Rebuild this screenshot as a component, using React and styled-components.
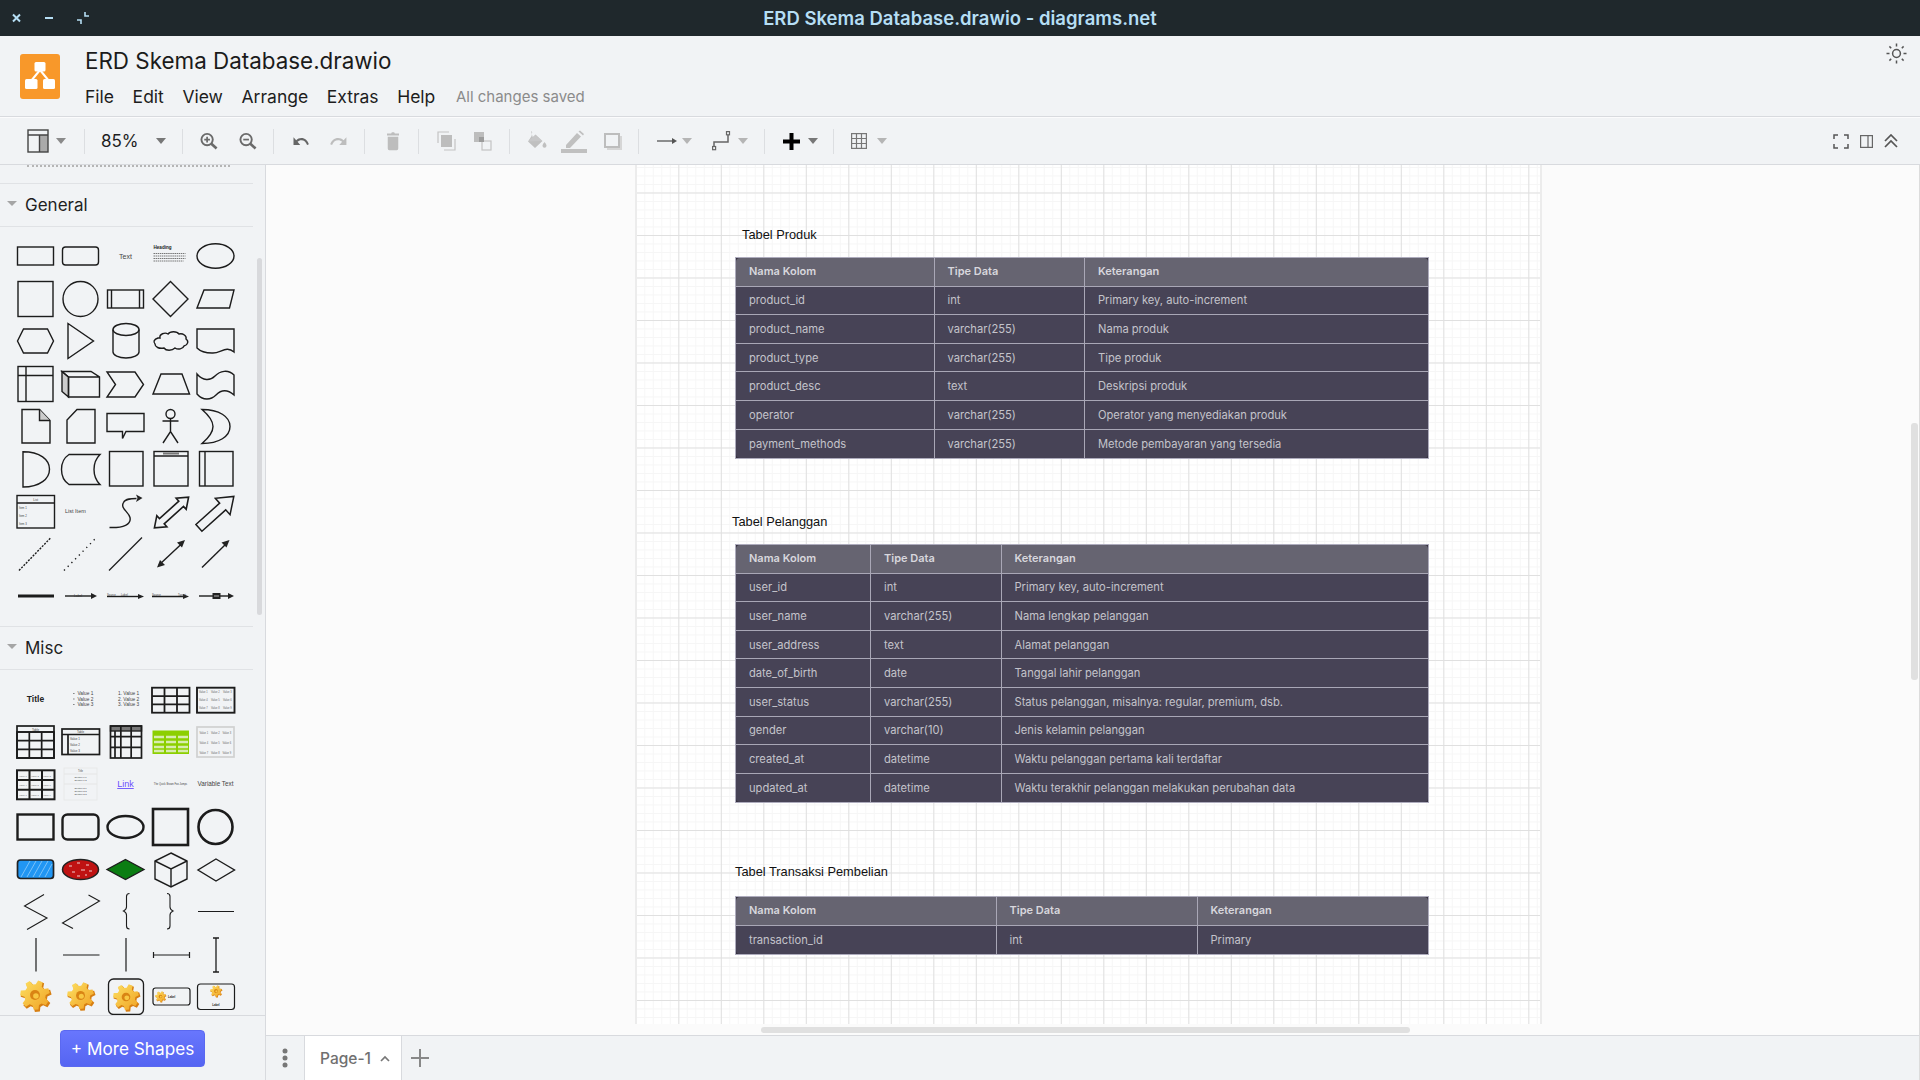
import React from 'react';
import styled, { createGlobalStyle } from 'styled-components';

const GlobalStyle = createGlobalStyle`
  html, body { margin: 0; padding: 0; height: 100%; overflow: hidden; }
  body { font-family: Inter, "Liberation Sans", sans-serif; background: #f1f3f5; }
  * { box-sizing: border-box; }
`;

const Shell = styled.div`
  display: flex;
  flex-direction: column;
  width: 1920px;
  height: 1080px;
  overflow: hidden;
`;

const TitleBar = styled.div`
  position: relative;
  display: flex;
  align-items: center;
  justify-content: center;
  flex: 0 0 36px;
  background: #1f282c;
  color: #b5def4;
  font-size: 18.5px;
  font-weight: 600;
`;

const WindowButtons = styled.div`
  position: absolute;
  left: 12px;
  top: 12px;
  display: flex;
  gap: 24px;
  height: 12px;
`;

const Header = styled.div`
  display: flex;
  flex: 0 0 81px;
  background: #f1f3f5;
  border-bottom: 1px solid #d8dade;
  padding-left: 20px;
`;

const LogoBox = styled.div`
  width: 40px;
  height: 45px;
  margin-top: 18px;
  border-radius: 3px;
  background: #f8982a;
`;

const TitleBlock = styled.div`
  margin-left: 25px;
  padding-top: 13px;
  flex: 1;
`;

const FileName = styled.div`
  font-size: 22.4px;
  line-height: 24px;
  color: #1b1b1b;
`;

const MenuRow = styled.div`
  display: flex;
  align-items: center;
  gap: 18.6px;
  margin-top: 11px;
  height: 24px;
  font-size: 17.5px;
  color: #1d1d1d;
`;

const SavedNote = styled.span`
  font-size: 15px;
  color: #8b8b8b;
  margin-left: 2px;
`;

const ThemeButton = styled.div`
  margin: 7px 13px 0 0;
`;

const Toolbar = styled.div`
  display: flex;
  align-items: center;
  flex: 0 0 48px;
  padding: 0 22px 0 0;
  background: #f1f3f5;
  border-top: 1px solid #fbfbfc;
  border-bottom: 1px solid #d8dade;
`;

const Tool = styled.div`
  display: flex;
  align-items: center;
  justify-content: center;
  flex: 0 0 auto;
  width: ${p => p.$w}px;
  margin-left: ${p => p.$ml}px;
`;

const Caret = styled.div`
  flex: 0 0 auto;
  margin-left: ${p => p.$ml}px;
  width: 0;
  height: 0;
  border-left: 5.5px solid transparent;
  border-right: 5.5px solid transparent;
  border-top: 6px solid ${p => p.$c || '#8a8a8a'};
`;

const Sep = styled.div`
  flex: 0 0 1px;
  height: 25px;
  margin-left: ${p => p.$ml}px;
  background: #dcdee1;
`;

const ZoomLabel = styled.div`
  margin-left: ${p => p.$ml}px;
  flex: 0 0 35px;
  font-size: 17px;
  color: #1e1e1e;
`;

const RightTools = styled.div`
  display: flex;
  align-items: center;
  gap: 11px;
  margin-left: auto;
`;

const Main = styled.div`
  display: flex;
  flex: 1;
  min-height: 0;
`;

const Sidebar = styled.div`
  position: relative;
  display: flex;
  flex-direction: column;
  flex: 0 0 266px;
  border-right: 1px solid #d8dade;
  background: #f1f3f5;
  overflow: hidden;
`;

const SideScroll = styled.div`
  flex: 1;
  min-height: 0;
  overflow: hidden;
`;

const DottedEdge = styled.div`
  height: 18px;
  margin-left: 27px;
  width: 203px;
  border-top: 2px dotted #b5b5b5;
`;

const SectionHead = styled.div`
  display: flex;
  align-items: center;
  gap: 8px;
  width: 253px;
  height: 44px;
  padding-left: 7px;
  border-top: 1px solid #e0e2e5;
  border-bottom: 1px solid #e0e2e5;
  font-size: 17px;
  color: #1f1f1f;
`;

const SectionCaret = styled.div`
  width: 0;
  height: 0;
  border-left: 5px solid transparent;
  border-right: 5px solid transparent;
  border-top: 5.5px solid #a5a5a5;
  margin-top: -3px;
`;

const ShapeGrid = styled.div`
  display: grid;
  grid-template-columns: repeat(5, 45px);
  grid-auto-rows: 42.5px;
  padding: 8px 0 8px 12.5px;
`;

const ShapeSvg = styled.svg.attrs({ viewBox: '0 0 45 42.5', width: 45, height: 42.5 })`
  display: block;
  fill: none;
  stroke: #1c1c1c;
  stroke-width: 1.4;
  text { stroke: none; fill: #444; font-family: "Liberation Sans", sans-serif; }
`;

const SideThumb = styled.div`
  position: absolute;
  left: 257px;
  top: 93px;
  width: 5px;
  height: 357px;
  border-radius: 3px;
  background: #d8d9dc;
`;

const SideFooter = styled.div`
  display: flex;
  justify-content: center;
  flex: 0 0 65px;
  padding-top: 14px;
  border-top: 1px solid #d8dade;
`;

const MoreButton = styled.button`
  width: 145px;
  height: 37px;
  padding: 0;
  border: 1px solid #5a68f0;
  border-radius: 4px;
  background: linear-gradient(#6876fd, #5565f2);
  color: #fff;
  font-family: inherit;
  font-size: 17.2px;
`;

const Workspace = styled.div`
  display: flex;
  flex-direction: column;
  flex: 1;
  min-width: 0;
`;

const Canvas = styled.div`
  position: relative;
  flex: 1;
  min-height: 0;
  padding: 0 0 11px 369px;
  background: #fbfbfb;
  border-right: 1px solid #dcdcdc;
`;

const Page = styled.div`
  position: relative;
  width: 907px;
  height: 100%;
  background-color: #fff;
  background-image:
    linear-gradient(#e0e0e0 1px, transparent 1px),
    linear-gradient(90deg, #e0e0e0 1px, transparent 1px),
    linear-gradient(#f6f6f6 1px, transparent 1px),
    linear-gradient(90deg, #f6f6f6 1px, transparent 1px);
  background-size: 42.5px 42.5px, 42.5px 42.5px, 8.5px 8.5px, 8.5px 8.5px;
  background-position: 0 27.5px, -1.2px 0, 0 2px, -1.2px 0;
  border-left: 2px solid #ececec;
  border-right: 2px solid #ececec;
`;

const Node = styled.div`
  position: absolute;
  left: ${p => p.$x}px;
  top: ${p => p.$y}px;
`;

const NodeLabel = styled(Node)`
  font-family: "Liberation Sans", sans-serif;
  font-size: 12.8px;
  line-height: 16px;
  color: #111;
`;

const TableFrame = styled(Node)`
  display: grid;
  grid-template-columns: ${p => p.$cols};
  grid-auto-rows: 28.6px;
  width: 694px;
  border: 1px solid #aeacbd;
  background: #35313f;
  overflow: hidden;
`;

const Cell = styled.div`
  display: flex;
  align-items: center;
  padding-left: 13px;
  padding-bottom: ${p => (p.$head ? 1.5 : 0)}px;
  border-right: 1px solid #a9a7b6;
  border-bottom: 1px solid #a9a7b6;
  background: ${p => (p.$head ? '#666471' : '#474356')};
  color: ${p => (p.$head ? '#d8d7dd' : '#c4c3cb')};
  font-size: ${p => (p.$head ? 11 : 11.15)}px;
  font-weight: ${p => (p.$head ? 600 : 400)};
  white-space: nowrap;
  &:nth-child(3n) { border-right: 0; }
  &:nth-last-child(-n + 3) { border-bottom: 0; }
  &:nth-child(1) { border-top-left-radius: 4px; }
  &:nth-child(3) { border-top-right-radius: 4px; }
  &:nth-last-child(3) { border-bottom-left-radius: 4px; }
  &:nth-last-child(1) { border-bottom-right-radius: 4px; }
`;

const HThumb = styled.div`
  position: absolute;
  left: 495px;
  bottom: 2px;
  width: 649px;
  height: 6px;
  border-radius: 3px;
  background: #e0e0e0;
`;

const VThumb = styled.div`
  position: absolute;
  right: 1px;
  top: 258px;
  width: 7px;
  height: 257px;
  border-radius: 3px;
  background: #e0e0e0;
`;

const PageBar = styled.div`
  display: flex;
  flex: 0 0 45px;
  background: #f1f3f5;
  border-top: 1px solid #d8dade;
  border-right: 1px solid #dcdcdc;
`;

const PagesMenu = styled.div`
  display: flex;
  align-items: center;
  justify-content: center;
  width: 39px;
  border-right: 1px solid #d8dade;
`;

const PageTab = styled.div`
  display: flex;
  align-items: center;
  gap: 9px;
  width: 97px;
  padding-left: 15px;
  background: #fff;
  border-right: 1px solid #d8dade;
  color: #707070;
  font-size: 15.5px;
  font-weight: 500;
`;

const AddPage = styled.div`
  display: flex;
  align-items: center;
  margin-left: 9px;
`;

/* --- toolbar icons --- */
const MatIcon = ({ w, h, color, d, flip }) => (
  <svg width={w} height={h} viewBox="0 0 24 24" preserveAspectRatio="none" fill={color} style={flip ? { transform: 'scaleX(-1)' } : undefined}>
    <path d={d} />
  </svg>
);

const UNDO = 'M12.5 8c-2.65 0-5.05.99-6.9 2.6L2 7v9h9l-3.62-3.62c1.39-1.16 3.16-1.88 5.12-1.88 3.54 0 6.55 2.31 7.6 5.5l2.37-.78C21.08 11.03 17.15 8 12.5 8z';
const TRASH = 'M5 7h14v14a2 2 0 0 1-2 2H7a2 2 0 0 1-2-2zM19 3h-4.5l-1-1.5h-3l-1 1.5H4v2.5h16V3z';

const LayoutIcon = () => (
  <svg width="22" height="24" viewBox="0 0 22 24" fill="none" stroke="#444" strokeWidth="1.4">
    <rect x="13" y="6" width="8" height="17" fill="#aaa" stroke="none" />
    <rect x="1" y="1" width="20" height="22" />
    <path d="M1 6h20M12.500 6v17" />
  </svg>
);

const MagnifierIcon = ({ plus }) => (
  <svg width="19" height="18" viewBox="0 0 19 18" fill="none" stroke="#6a6a6a" strokeWidth="2">
    <circle cx="7.500" cy="7.500" r="6" />
    <path d="M12 12l5.500 5" strokeWidth="2.800" />
    <path d={plus ? 'M4.500 7.500h6M7.500 4.500v6' : 'M4.500 7.500h6'} strokeWidth="1.800" />
  </svg>
);

const ToFrontIcon = ({ back }) => (
  <svg width="19" height="20" viewBox="0 0 19 20" fill="none">
    {back ? (
      <>
        <rect x="1" y="1" width="10" height="10" fill="#bdbdbd" />
        <rect x="9" y="10" width="9" height="9" fill="#f1f3f5" stroke="#c4c4c4" strokeWidth="1.200" />
        <rect x="6" y="6" width="5" height="5" fill="#9c9c9c" />
      </>
    ) : (
      <>
        <path d="M1 12V1h11M18 8v11H7" stroke="#c4c4c4" strokeWidth="1.200" />
        <rect x="4" y="4" width="11" height="12" fill="#bdbdbd" />
      </>
    )}
  </svg>
);

const FillIcon = () => (
  <svg width="21" height="20" viewBox="0 0 21 20">
    <path d="M5 0l1.200 1L5.600 5 2 10.500 9 17l7.500-7-7-6.500-2.800 2.500z" fill="#c0c0c0" />
    <path d="M2 10.500L9 4l7 6z" fill="#f1f3f5" opacity="0.15" />
    <path d="M18.500 11s-2 2.300-2 3.800a2 2 0 0 0 4 0c0-1.500-2-3.800-2-3.800z" fill="#c0c0c0" />
  </svg>
);

const StrokeIcon = () => (
  <svg width="26" height="23" viewBox="0 0 26 23">
    <path d="M5 15l11-12 4 3.500L9 18H5zM17.500 1.500l1.500-1 4 3.500-1 1.500z" fill="#c0c0c0" />
    <rect x="0" y="19" width="26" height="4" fill="#c0c0c0" />
  </svg>
);

const ShadowIcon = () => (
  <svg width="18" height="17" viewBox="0 0 18 17">
    <rect x="3" y="3" width="15" height="14" fill="#d6d6d6" />
    <rect x="1" y="1" width="14" height="13" fill="#f1f3f5" stroke="#bdbdbd" strokeWidth="2" />
  </svg>
);

const ConnectionIcon = () => (
  <svg width="20" height="8" viewBox="0 0 20 8" fill="none" stroke="#555">
    <path d="M0 4h17" strokeWidth="1.300" />
    <path d="M15 1l5 3-5 3z" fill="#555" stroke="none" />
  </svg>
);

const WaypointIcon = () => (
  <svg width="19" height="20" viewBox="0 0 19 20" fill="none" stroke="#666" strokeWidth="1.200">
    <path d="M2 15V11h14V4" strokeWidth="1.500" />
    <rect x="14.500" y="0.600" width="3" height="3.200" />
    <rect x="0.600" y="15.500" width="3" height="3.200" />
  </svg>
);

const PlusIcon = () => (
  <svg width="17" height="17" viewBox="0 0 17 17" fill="#000">
    <path d="M6.500 0h4v6.500H17v4h-6.500V17h-4v-6.500H0v-4h6.500z" />
  </svg>
);

const TableIcon = () => (
  <svg width="16" height="16" viewBox="0 0 16 16" fill="none" stroke="#777" strokeWidth="1.200">
    <rect x="0.600" y="0.600" width="14.800" height="14.800" />
    <path d="M5.500 0.600v14.800M10.500 0.600v14.800M0.600 5.500h14.800M0.600 10.500h14.800" />
  </svg>
);

const FullscreenIcon = () => (
  <svg width="16" height="15" viewBox="0 0 16 15" fill="none" stroke="#555" strokeWidth="1.500">
    <path d="M5 1H1v4M11 1h4v4M5 14H1v-4M11 14h4v-4" />
  </svg>
);

const PanelIcon = () => (
  <svg width="13" height="13" viewBox="0 0 13 13" fill="none" stroke="#666" strokeWidth="1.200">
    <rect x="0.600" y="0.600" width="11.800" height="11.800" />
    <path d="M8 0.600v11.800" />
  </svg>
);

const CollapseIcon = () => (
  <svg width="14" height="14" viewBox="0 0 14 14" fill="none" stroke="#555" strokeWidth="1.700">
    <path d="M1 7l6-6 6 6M1 13l6-6 6 6" />
  </svg>
);

const SunIcon = () => (
  <svg width="21" height="21" viewBox="0 0 21 21" fill="none" stroke="#555" strokeWidth="1.500">
    <circle cx="10.500" cy="10.500" r="3.900" />
    <path d="M10.500 0.500v3M10.500 17.500v3M0.500 10.500h3M17.500 10.500h3M3.400 3.400l1.800 1.800M15.800 15.800l1.800 1.800M3.400 17.600l1.800-1.800M15.800 5.200l1.800-1.800" />
  </svg>
);

const DotsIcon = () => (
  <svg width="6" height="20" viewBox="0 0 6 20" fill="#777">
    <circle cx="3" cy="3" r="2.500" />
    <circle cx="3" cy="10" r="2.500" />
    <circle cx="3" cy="17" r="2.500" />
  </svg>
);

/* --- palette pieces --- */
const gearPath = (cx, cy, R) => {
  const teeth = 7;
  const r = R * 0.72;
  let d = '';
  for (let i = 0; i < teeth; i++) {
    const a = (i / teeth) * Math.PI * 2 - 0.3;
    const s = (Math.PI * 2) / teeth;
    const pts = [
      [r, a - s * 0.34], [R, a - s * 0.18], [R, a + s * 0.18], [r, a + s * 0.34],
    ];
    pts.forEach(([rad, t], j) => {
      const x = (cx + Math.cos(t) * rad).toFixed(2);
      const y = (cy + Math.sin(t) * rad).toFixed(2);
      d += `${i === 0 && j === 0 ? 'M' : 'L'}${x} ${y}`;
    });
  }
  return d + 'Z';
};

const Gear = ({ cx, cy, R }) => (
  <g stroke="none">
    <path d={gearPath(cx + R * 0.08, cy + R * 0.1, R)} fill="#d77f12" />
    <path d={gearPath(cx, cy, R * 0.96)} fill="url(#gearFill)" />
    <circle cx={cx} cy={cy} r={R * 0.32} fill="#d98414" />
    <circle cx={cx + R * 0.06} cy={cy + R * 0.06} r={R * 0.18} fill="#f8c843" />
  </g>
);

const Grid3 = ({ x, y, w, h, sw = 1.8, stroke = '#1c1c1c' }) => (
  <g stroke={stroke} strokeWidth={sw}>
    <rect x={x} y={y} width={w} height={h} />
    <path d={`M${x + w / 3} ${y}v${h}M${x + (2 * w) / 3} ${y}v${h}M${x} ${y + h / 3}h${w}M${x} ${y + (2 * h) / 3}h${w}`} />
  </g>
);

const TinyValues = ({ x, y, dx, dy, fill = '#666', size = 2.6 }) => (
  <g>
    {[0, 1, 2].map(r => [0, 1, 2].map(c => (
      <text key={`${r}${c}`} x={x + c * dx} y={y + r * dy} fontSize={size} style={{ fill }}>{`Value ${r * 3 + c + 1}`}</text>
    )))}
  </g>
);

const generalShapes = [
  <rect x="4.500" y="12" width="36" height="18" />,
  <rect x="4.500" y="12" width="36" height="18" rx="3" />,
  <text x="22.500" y="23.500" fontSize="7" textAnchor="middle">Text</text>,
  <g>
    <text x="5.500" y="14" fontSize="4.600" fontWeight="700" style={{ fill: '#222' }}>Heading</text>
    <path d="M5.500 18.500h32M5.500 21h32M5.500 23.500h32M5.500 26h30" stroke="#777" strokeWidth="1" strokeDasharray="1.500 0.600" />
  </g>,
  <ellipse cx="22.500" cy="21" rx="18.500" ry="12.300" />,

  <rect x="5" y="3.500" width="35" height="35" />,
  <circle cx="22.500" cy="21" r="17.500" />,
  <g><rect x="4.500" y="12" width="36" height="18" /><path d="M8.500 12v18M36.500 12v18" /></g>,
  <path d="M22.500 3.500L40 21 22.500 38.500 5 21z" />,
  <path d="M4 30l7-18h30l-4.500 18z" />,

  <path d="M4.500 21l6-12h24l6 12-6 12h-24z" />,
  <path d="M10 3.500L35.500 21 10 38.500z" />,
  <g><path d="M10 9.500V32c0 3 5.500 6 13 6s13-3 13-6V9.500" /><ellipse cx="23" cy="9.500" rx="13" ry="6" /></g>,
  <path d="M12 18c-1-4 5-6 8-4 2-3 9-3 11 0 4-1 8 2 7 5 3 2 2 6-2 7-1 3-6 4-9 2-3 3-9 3-11 0-5 1-9-1-9-4-2-2-1-5 3-6z" />,
  <path d="M4 9h37v23c-8-7-14 2-22 1-6 0-11-1-15-5z" />,

  <g><rect x="5" y="3.500" width="35" height="35" /><path d="M13 3.500v35M5 12.500h35" /></g>,
  <g><path d="M4 8.500v20l6.500 5.500V14z" fill="#ccc" /><path d="M4 8.500h29l8.500 5.500v20h-31V14zM10.500 14h31" /></g>,
  <path d="M4 9h28l8.500 12.500L32 34H4l8.500-12.500z" />,
  <path d="M5 31l8-20h21l7.500 20z" />,
  <path d="M4 11c6 7 13 7 18 2s13-7 19-1v20c-7-6-13-5-18 0s-13 6-19-1z" />,

  <g><path d="M9 4.500h17.500l10.500 11V38H9z" /><path d="M26.500 4.500v11H37" fill="#ccc" /></g>,
  <path d="M19 4.500h18V38H9V15z" />,
  <path d="M4 8.500h37v18H23l-3.500 7v-7H4z" />,
  <g><circle cx="22.500" cy="9" r="4.500" /><path d="M22.500 13.500v13M14.500 16h16M15 38l7.500-11.500L30 38" /></g>,
  <path d="M9 4.500c17 0 28 7 28 17s-11 17-28 17c7-6 11-11 11-17s-4-11-11-17z" />,

  <path d="M10 3.700c17 0 26.500 8 26.500 17.500S27 39 10 39z" />,
  <path d="M11 6.500h31c-8 8-8 22 0 30H11C1 30 1 13 11 6.500z" />,
  <rect x="6.500" y="3.500" width="33.500" height="34.500" />,
  <g><rect x="6" y="3.500" width="34" height="34.500" /><path d="M6 8h34" /><rect x="15" y="4.500" width="16" height="2" fill="#777" stroke="none" /></g>,
  <g><rect x="6.500" y="3.500" width="33.500" height="34.500" /><path d="M12 3.500v34.500" /></g>,

  <g>
    <rect x="4" y="5.500" width="37.500" height="32.500" />
    <path d="M4 13h37.500" />
    <text x="22.700" y="10.800" fontSize="3" textAnchor="middle">List</text>
    <text x="6" y="19" fontSize="2.800">Item 1</text>
    <text x="6" y="27" fontSize="2.800">Item 2</text>
    <text x="6" y="35" fontSize="2.800">Item 3</text>
  </g>,
  <text x="7" y="23" fontSize="5.500">List Item</text>,
  <g>
    <path d="M6.500 37.500c14 .5 22-3 20.500-10-1.500-6-10-9-6.500-15 2-4 8-4 13-4" />
    <path d="M33 4.500l6.500 3.500-6.500 4 1.500-4z" fill="#222" stroke="none" />
  </g>,
  <path transform="translate(23.500 22.500) rotate(-42)" d="M-23 0l10-7.500v4h26v-4l10 7.500-10 7.500v-4h-26v4z" strokeWidth="1.600" />,
  <path transform="translate(23 22.500) rotate(-42)" d="M-23-4.500H9V-11l15 11-15 11V4.500h-32z" strokeWidth="1.500" />,

  <path d="M6 37.500L38 4.500" strokeWidth="1.400" strokeDasharray="2 1.300" />,
  <path d="M6 37.500L38 5" strokeWidth="1.400" strokeDasharray="1.300 4" />,
  <path d="M6 37.500L39 4.500" strokeWidth="1.300" />,
  <g><path d="M11 32L34.500 10" /><path d="M37 7l-8 2.500 5 5zM9 34.500l8-2.500-5-5z" fill="#222" stroke="none" /></g>,
  <g><path d="M9 34.500L34 10" /><path d="M36.500 7l-8 2.500 5 5z" fill="#222" stroke="none" /></g>,

  <path d="M5 21h36" strokeWidth="3" />,
  <g><path d="M7 21h28" /><path d="M33 18l6 3-6 3z" fill="#222" stroke="none" /><text x="16" y="22.200" fontSize="3.300" style={{ fill: '#333' }}>Label</text></g>,
  <g><path d="M4 21.500h32" /><path d="M35 19l6 2.500-6 2.500z" fill="#222" stroke="none" /><text x="4" y="20.500" fontSize="2.800">Source</text><text x="18" y="21" fontSize="2.800">Label</text></g>,
  <g><path d="M4 21.500h33" /><path d="M35 19l6 2.500-6 2.500z" fill="#222" stroke="none" /><text x="4" y="20.500" fontSize="2.800">Source</text><text x="30" y="20.500" fontSize="2.800">Target</text></g>,
  <g><path d="M6 21h31" /><path d="M35 18l6 3-6 3z" fill="#222" stroke="none" /><rect x="19.500" y="18" width="8" height="6" fill="#222" stroke="none" /><path d="M21 21h5" stroke="#ddd" strokeWidth="0.800" /></g>,
];

const miscShapes = [
  <text x="22.500" y="24" fontSize="8.500" fontWeight="700" textAnchor="middle" style={{ fill: '#222' }}>Title</text>,
  <g>
    <path d="M15.500 15.500h.8M15.500 21h.8M15.500 26.500h.8" strokeWidth="1.200" />
    <text x="19.500" y="17" fontSize="4.800">Value 1</text>
    <text x="19.500" y="22.500" fontSize="4.800">Value 2</text>
    <text x="19.500" y="28" fontSize="4.800">Value 3</text>
  </g>,
  <g>
    <text x="15" y="17" fontSize="4.800">1. Value 1</text>
    <text x="15" y="22.500" fontSize="4.800">2. Value 2</text>
    <text x="15" y="28" fontSize="4.800">3. Value 3</text>
  </g>,
  <Grid3 x={4} y={9.700} w={37.500} h={25} />,
  <g>
    <rect x="4" y="9.700" width="37.500" height="25" strokeWidth="1.900" />
    <TinyValues x={6} y={15} dx={12} dy={8} />
  </g>,

  <g>
    <rect x="4" y="6" width="37" height="32" strokeWidth="1.700" />
    <path d="M4 12h37" strokeWidth="1.700" />
    <text x="22.500" y="10.800" fontSize="3" textAnchor="middle">Table</text>
    <Grid3 x={4} y={12} w={37} h={26} sw={1.700} />
  </g>,
  <g>
    <rect x="4" y="9" width="37.500" height="25.500" strokeWidth="1.700" />
    <path d="M4 14.500h37.500M10 14.500v20" strokeWidth="1.700" />
    <text x="22.500" y="13" fontSize="3" textAnchor="middle">Table</text>
    <text x="12" y="20" fontSize="3">Value 1</text>
    <text x="12" y="26" fontSize="3">Value 2</text>
    <text x="12" y="32" fontSize="3">Value 3</text>
  </g>,
  <g>
    <rect x="7.500" y="6" width="31" height="5" fill="#777" stroke="#222" />
    <Grid3 x={7.500} y={6} w={31} h={32} sw={1.700} />
    <path d="M12 11v27" strokeWidth="1.700" />
  </g>,
  <g>
    <rect x="4.500" y="10.500" width="36.500" height="23.500" fill="#8ccf00" stroke="none" />
    <path d="M6 17h10M18 17h10M30 17h10M6 22h10M18 22h10M30 22h10M6 27h10M18 27h10M30 27h10M6 31h10M18 31h10M30 31h10" stroke="#d8ecb0" strokeWidth="2.500" />
  </g>,
  <g>
    <rect x="4" y="7" width="37" height="30" stroke="#d0d0d0" strokeWidth="1.700" />
    <TinyValues x={6.500} y={14} dx={11.500} dy={10} />
  </g>,

  <g>
    <Grid3 x={4} y={7.300} w={37.500} h={29} sw={2} />
    <TinyValues x={6} y={13.500} dx={12} dy={9.500} size={2.400} />
  </g>,
  <g stroke="#e6e6e6" strokeWidth="0.800">
    <rect x="6" y="5" width="33" height="32" />
    <path d="M6 11h33M6 21h33" strokeWidth="1.200" />
    <text x="22.500" y="9" fontSize="2.600" textAnchor="middle">Title</text>
    <text x="22.500" y="15" fontSize="2.400" textAnchor="middle">Section 1.1</text>
    <text x="22.500" y="18" fontSize="2.400" textAnchor="middle">Section 1.2</text>
    <text x="22.500" y="26" fontSize="2.400" textAnchor="middle">Section 2.1</text>
    <text x="22.500" y="29" fontSize="2.400" textAnchor="middle">Section 2.2</text>
    <text x="22.500" y="32" fontSize="2.400" textAnchor="middle">Section 2.3</text>
  </g>,
  <text x="22.500" y="24" fontSize="9" textAnchor="middle" textDecoration="underline" style={{ fill: '#6a4dff' }}>Link</text>,
  <text x="22.500" y="22.300" fontSize="2.600" textAnchor="middle">The Quick Brown Fox Jumps</text>,
  <text x="22.500" y="23.200" fontSize="6.300" textAnchor="middle">Variable Text</text>,

  <rect x="4.500" y="9.500" width="36" height="25" strokeWidth="2.400" />,
  <rect x="4.500" y="9.500" width="36" height="25" rx="5" strokeWidth="2.400" />,
  <ellipse cx="22.500" cy="22" rx="18" ry="11" strokeWidth="2.400" />,
  <rect x="5" y="4" width="35" height="36" strokeWidth="2.600" />,
  <circle cx="22.500" cy="22" r="17" strokeWidth="2.600" />,

  <g>
    <rect x="4.500" y="12" width="36" height="18.500" rx="3" fill="#2196f3" stroke="#222" strokeWidth="1.700" />
    <path d="M8 29l9-16M14 29l9-16M20 29l9-16M26 29l9-16M32 29l7-13" stroke="#9fd4fb" strokeWidth="0.700" />
  </g>,
  <g>
    <ellipse cx="22.500" cy="21.500" rx="18" ry="10" fill="#bf1212" stroke="#222" strokeWidth="1.500" />
    <path d="M11 18h3M19 15h3M28 17h3M14 24h3M23 22h4M31 23h3M19 28h3M27 27h2" stroke="#f0d0d0" strokeWidth="1.200" />
  </g>,
  <path d="M22.500 11.500L41 21.500 22.500 31.500 4 21.500z" fill="#0b7d12" strokeWidth="1.300" />,
  <g><path d="M23 5l16 8v18l-16 8-16-8V13z" /><path d="M7 13l16 8 16-8M23 21v18" /></g>,
  <path d="M23 11l18.500 11L23 33 5 22z" />,

  <path d="M31 4.500L11.500 16 34 28 14 39.500" strokeWidth="1.100" />,
  <path d="M30.500 5L41.500 11 4.500 33 15 38.500" strokeWidth="1.100" />,
  <path d="M26.500 3.500c-2.500 0-3 1-3 3V17c0 2-1 3-3 4 2 1 3 2 3 4v11c0 2 .5 3 3 3" strokeWidth="1.100" />,
  <path d="M19 3.500c2.500 0 3 1 3 3V17c0 2 1 3 3 4-2 1-3 2-3 4v11c0 2-.5 3-3 3" strokeWidth="1.100" />,
  <path d="M5 21.500h36" strokeWidth="1.200" />,

  <path d="M23 5v33.500" strokeWidth="1.200" />,
  <path d="M5 22h36.500" strokeWidth="1.200" />,
  <path d="M23 5v33.500" strokeWidth="1.200" />,
  <path d="M5.500 22h36M5.500 19v6M41.500 19v6" strokeWidth="1.200" />,
  <path d="M23 5v34M20 5h6M20 39h6" strokeWidth="1.300" />,

  <Gear cx={22} cy={20} R={15.500} />,
  <Gear cx={22.500} cy={20.500} R={14} />,
  <g>
    <rect x="5.500" y="4" width="35" height="35.500" rx="5" strokeWidth="1.300" />
    <Gear cx={23} cy={22} R={13.500} />
  </g>,
  <g>
    <rect x="5" y="13" width="37" height="17" rx="2.500" strokeWidth="1.200" />
    <Gear cx={12.500} cy={21.500} R={5.500} />
    <text x="20" y="22.500" fontSize="2.800" fontWeight="700" style={{ fill: '#222' }}>Label</text>
  </g>,
  <g>
    <rect x="4.500" y="9" width="37" height="25.500" rx="3" strokeWidth="1.200" />
    <Gear cx={23} cy={16} R={6} />
    <text x="23" y="30.500" fontSize="2.800" fontWeight="700" textAnchor="middle" style={{ fill: '#222' }}>Label</text>
  </g>,
];

const productRows = [
  ['product_id', 'int', 'Primary key, auto-increment'],
  ['product_name', 'varchar(255)', 'Nama produk'],
  ['product_type', 'varchar(255)', 'Tipe produk'],
  ['product_desc', 'text', 'Deskripsi produk'],
  ['operator', 'varchar(255)', 'Operator yang menyediakan produk'],
  ['payment_methods', 'varchar(255)', 'Metode pembayaran yang tersedia'],
];

const customerRows = [
  ['user_id', 'int', 'Primary key, auto-increment'],
  ['user_name', 'varchar(255)', 'Nama lengkap pelanggan'],
  ['user_address', 'text', 'Alamat pelanggan'],
  ['date_of_birth', 'date', 'Tanggal lahir pelanggan'],
  ['user_status', 'varchar(255)', 'Status pelanggan, misalnya: regular, premium, dsb.'],
  ['gender', 'varchar(10)', 'Jenis kelamin pelanggan'],
  ['created_at', 'datetime', 'Waktu pelanggan pertama kali terdaftar'],
  ['updated_at', 'datetime', 'Waktu terakhir pelanggan melakukan perubahan data'],
];

const transactionRows = [['transaction_id', 'int', 'Primary']];

const DataTable = ({ x, y, cols, rows }) => (
  <TableFrame $x={x} $y={y} $cols={cols}>
    {['Nama Kolom', 'Tipe Data', 'Keterangan'].map(h => <Cell key={h} $head>{h}</Cell>)}
    {rows.flat().map((text, i) => <Cell key={i}>{text}</Cell>)}
  </TableFrame>
);

const Palette = ({ shapes }) => (
  <ShapeGrid>
    {shapes.map((shape, i) => <ShapeSvg key={i}>{shape}</ShapeSvg>)}
  </ShapeGrid>
);

export default function App() {
  return (
    <Shell>
      <GlobalStyle />
      <svg width="0" height="0" style={{ position: 'absolute' }}>
        <defs>
          <linearGradient id="gearFill" x1="0" y1="0" x2="1" y2="1">
            <stop offset="0" stopColor="#fde062" />
            <stop offset="1" stopColor="#f0a224" />
          </linearGradient>
        </defs>
      </svg>
      <TitleBar>
        <WindowButtons>
          <svg width="9" height="12" viewBox="0 0 9 12" stroke="#b5def4" strokeWidth="2"><path d="M1 2.500l7 7M8 2.500l-7 7" /></svg>
          <svg width="8" height="12" viewBox="0 0 8 12" stroke="#b5def4" strokeWidth="2"><path d="M0 6h8" /></svg>
          <svg width="12" height="12" viewBox="0 0 12 12" fill="none" stroke="#b5def4" strokeWidth="1.600"><path d="M0 8h4v4M8 0v4h4" /></svg>
        </WindowButtons>
        ERD Skema Database.drawio - diagrams.net
      </TitleBar>
      <Header>
        <LogoBox>
          <svg width="40" height="45" viewBox="0 0 40 45">
            <path d="M20 16L11 27M20 16l9 11" stroke="#fff" strokeWidth="2" />
            <rect x="14.500" y="8" width="11" height="9.500" rx="1.500" fill="#fff" />
            <rect x="5" y="25" width="12.500" height="10" rx="1.500" fill="#fff" />
            <rect x="23" y="25" width="12" height="10" rx="1.500" fill="#fff" />
          </svg>
        </LogoBox>
        <TitleBlock>
          <FileName>ERD Skema Database.drawio</FileName>
          <MenuRow>
            <span>File</span>
            <span>Edit</span>
            <span>View</span>
            <span>Arrange</span>
            <span>Extras</span>
            <span>Help</span>
            <SavedNote>All changes saved</SavedNote>
          </MenuRow>
        </TitleBlock>
        <ThemeButton><SunIcon /></ThemeButton>
      </Header>
      <Toolbar>
        <Tool $w={22} $ml={27}><LayoutIcon /></Tool>
        <Caret $ml={7} />
        <Sep $ml={18} />
        <ZoomLabel $ml={16}>85%</ZoomLabel>
        <Caret $ml={17} $c="#777" />
        <Sep $ml={16} />
        <Tool $w={18} $ml={17}><MagnifierIcon plus /></Tool>
        <Tool $w={18} $ml={21}><MagnifierIcon /></Tool>
        <Sep $ml={16} />
        <Tool $w={18} $ml={18}><MatIcon w={22} h={21} color="#666" d={UNDO} /></Tool>
        <Tool $w={19} $ml={19}><MatIcon w={22} h={21} color="#bdbdbd" d={UNDO} flip /></Tool>
        <Sep $ml={16} />
        <Tool $w={18} $ml={19}><MatIcon w={18} h={20} color="#bdbdbd" d={TRASH} /></Tool>
        <Sep $ml={16} />
        <Tool $w={19} $ml={18}><ToFrontIcon /></Tool>
        <Tool $w={19} $ml={17}><ToFrontIcon back /></Tool>
        <Sep $ml={17} />
        <Tool $w={21} $ml={16}><FillIcon /></Tool>
        <Tool $w={26} $ml={14}><StrokeIcon /></Tool>
        <Tool $w={18} $ml={17}><ShadowIcon /></Tool>
        <Sep $ml={16} />
        <Tool $w={20} $ml={18}><ConnectionIcon /></Tool>
        <Caret $ml={5} $c="#b5b5b5" />
        <Tool $w={19} $ml={20}><WaypointIcon /></Tool>
        <Caret $ml={7} $c="#b5b5b5" />
        <Sep $ml={16} />
        <Tool $w={17} $ml={18}><PlusIcon /></Tool>
        <Caret $ml={8} $c="#777" />
        <Sep $ml={15} />
        <Tool $w={16} $ml={17}><TableIcon /></Tool>
        <Caret $ml={10} $c="#b5b5b5" />
        <RightTools>
          <FullscreenIcon />
          <PanelIcon />
          <CollapseIcon />
        </RightTools>
      </Toolbar>
      <Main>
        <Sidebar>
          <SideScroll>
            <DottedEdge />
            <SectionHead><SectionCaret />General</SectionHead>
            <Palette shapes={generalShapes} />
            <SectionHead><SectionCaret />Misc</SectionHead>
            <Palette shapes={miscShapes} />
          </SideScroll>
          <SideThumb />
          <SideFooter>
            <MoreButton>+ More Shapes</MoreButton>
          </SideFooter>
        </Sidebar>
        <Workspace>
          <Canvas>
            <Page>
              <NodeLabel $x={105} $y={62}>Tabel Produk</NodeLabel>
              <DataTable x={98} y={92} cols="198.500px 150.500px 1fr" rows={productRows} />
              <NodeLabel $x={95} $y={349}>Tabel Pelanggan</NodeLabel>
              <DataTable x={98} y={379} cols="135px 130.500px 1fr" rows={customerRows} />
              <NodeLabel $x={98} $y={699}>Tabel Transaksi Pembelian</NodeLabel>
              <DataTable x={98} y={731} cols="260.500px 201px 1fr" rows={transactionRows} />
            </Page>
            <HThumb />
            <VThumb />
          </Canvas>
          <PageBar>
            <PagesMenu><DotsIcon /></PagesMenu>
            <PageTab>
              Page-1
              <svg width="10" height="7" viewBox="0 0 10 7" fill="none" stroke="#777" strokeWidth="1.700"><path d="M1 6l4-4 4 4" /></svg>
            </PageTab>
            <AddPage>
              <svg width="18" height="18" viewBox="0 0 18 18" stroke="#888" strokeWidth="2"><path d="M9 0v18M0 9h18" /></svg>
            </AddPage>
          </PageBar>
        </Workspace>
      </Main>
    </Shell>
  );
}
